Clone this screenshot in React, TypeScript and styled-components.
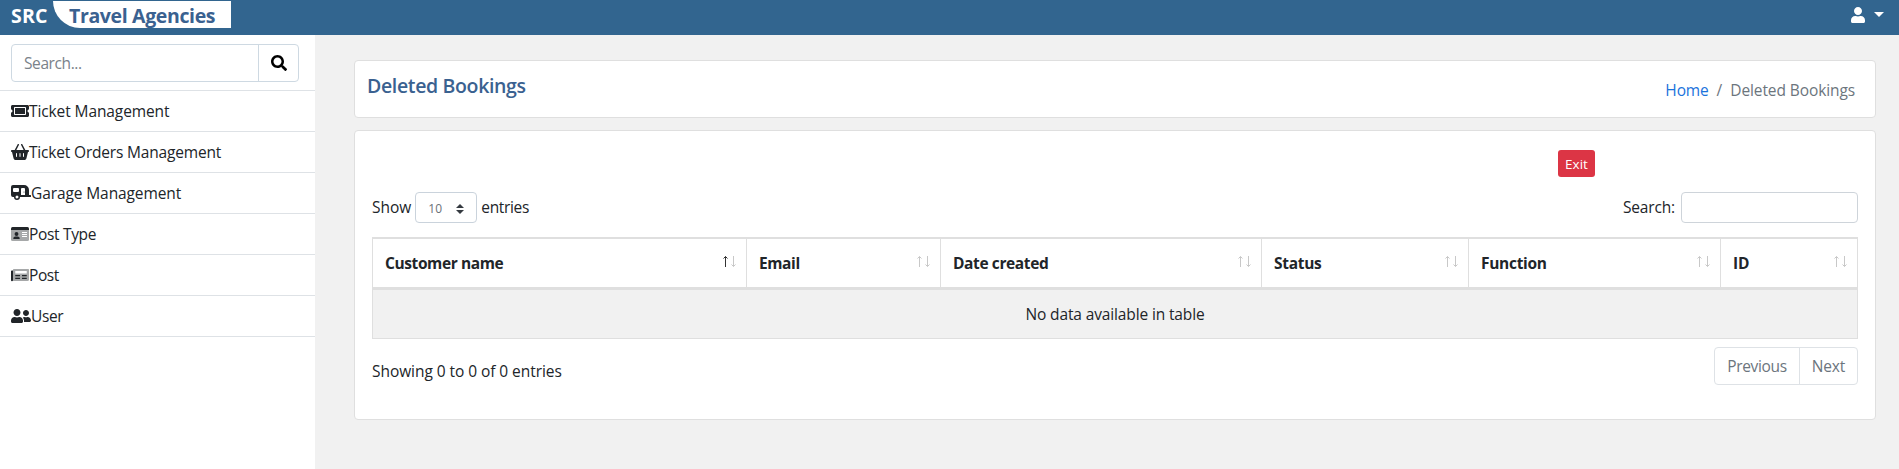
import React from 'react';
import styled, { createGlobalStyle } from 'styled-components';
import { FaCaravan, FaSearch, FaTicketAlt, FaUser, FaUserFriends } from 'react-icons/fa';
import { FaBasketShopping } from 'react-icons/fa6';

const GlobalStyle = createGlobalStyle`
  *, *::before, *::after { box-sizing: border-box; }
  body {
    margin: 0;
    background: #f1f1f1;
    color: #212529;
    font: 400 15.5px/24px "Open Sans", "Liberation Sans", sans-serif;
  }
`;

const Page = styled.div`
  height: 469px;
  display: flex;
  flex-direction: column;
  overflow: hidden;
`;

const Label = styled.span<{ $tracking?: number }>`
  letter-spacing: ${({ $tracking = 0 }) => $tracking}px;
  white-space: nowrap;
`;

const TopBar = styled.header`
  height: 35px;
  flex: none;
  display: flex;
  align-items: flex-start;
  background: #32658f;
  padding: 1px 15px 0 11px;
`;

const Brand = styled.div`
  display: flex;
  font-size: 19.5px;
  font-weight: 700;
  line-height: 29px;
  color: #fff;
`;

const BrandMark = styled(Label)`
  width: 42px;
`;

const BrandName = styled.div`
  width: 178px;
  height: 27px;
  padding-left: 16px;
  background: #fff;
  color: #3a6190;
  border-bottom-left-radius: 27px;
`;

const AccountMenu = styled.div`
  margin-left: auto;
  display: flex;
  align-items: flex-start;
  gap: 8px;
  padding-top: 6px;
  color: #fff;
`;

const Caret = styled.span`
  margin-top: 5px;
  border: 5px solid transparent;
  border-top-color: #fff;
  border-bottom: 0;
`;

const Body = styled.div`
  flex: 1;
  display: flex;
`;

const Sidebar = styled.aside`
  width: 315px;
  flex: none;
  background: #fff;
`;

const SearchGroup = styled.div`
  display: flex;
  width: 288px;
  height: 38px;
  margin: 9px 0 8px 11px;
  border: 1px solid #ced9e2;
  border-radius: 4px;
`;

const SearchField = styled.div`
  width: 247px;
  padding: 6px 12px;
  border-right: 1px solid #ced9e2;
  color: #7a828a;
`;

const SearchButton = styled.div`
  flex: 1;
  display: flex;
  align-items: center;
  justify-content: center;
  color: #000;
`;

const Menu = styled.nav`
  border-top: 1px solid #dee2e6;
`;

const MenuItem = styled.div<{ $iconWidth: number }>`
  display: flex;
  align-items: center;
  height: 41px;
  padding-left: 11px;
  border-bottom: 1px solid #dee2e6;

  svg {
    flex: none;
    width: ${({ $iconWidth }) => $iconWidth}px;
    height: 16px;
    margin-bottom: 1px;
  }
`;

const Content = styled.main`
  flex: 1;
  padding: 25px 23px 0 39px;
`;

const Card = styled.section`
  background: #fff;
  border: 1px solid #dfdfdf;
  border-radius: 4px;
`;

const TitleCard = styled(Card)`
  display: flex;
  justify-content: space-between;
  height: 58px;
  padding: 12px 20px 0 12px;
`;

const Title = styled.h1`
  margin: 0;
  color: #3a6190;
  font-size: 19.5px;
  font-weight: 600;
  line-height: 26px;
`;

const Breadcrumb = styled.div`
  display: flex;
  gap: 8px;
  padding-top: 5px;
  color: #6c757d;
`;

const HomeLink = styled(Label)`
  color: #1a73dc;
`;

const TableCard = styled(Card)`
  height: 290px;
  margin-top: 12px;
  padding: 19px 17px 0;
`;

const Actions = styled.div`
  display: flex;
  justify-content: flex-end;
  padding-right: 263px;
`;

const ExitButton = styled.div`
  width: 37px;
  height: 27px;
  border-radius: 3px;
  background: #dc3545;
  color: #fff;
  font-size: 13.5px;
  line-height: 28px;
  text-align: center;
`;

const Controls = styled.div`
  display: flex;
  justify-content: space-between;
  margin-top: 15px;
  height: 31px;
  line-height: 30px;
`;

const ControlGroup = styled.div`
  display: flex;
`;

const LengthSelect = styled.div`
  display: flex;
  align-items: center;
  justify-content: space-between;
  width: 62px;
  margin: 0 4px;
  padding: 2px 12px 0 12px;
  border: 1px solid #cad3dc;
  border-radius: 4px;
  color: #6a7178;
  font-size: 12px;
`;

const FilterInput = styled.div`
  width: 177px;
  margin-left: 6px;
  border: 1px solid #ced4da;
  border-radius: 4px;
`;

const TableFrame = styled.div`
  margin-top: 14px;
  border: 1px solid #dfdfdf;
  border-top-width: 2px;
`;

const HeadRow = styled.div`
  display: grid;
  grid-template-columns: 374px 194px 321px 207px 252px 1fr;
  height: 51px;
  border-bottom: 3px solid #dfdfdf;
`;

const HeadCell = styled.div`
  display: flex;
  justify-content: space-between;
  padding: 12px 9px 0 12px;
  font-weight: 700;
  border-right: 1px solid #dfdfdf;

  &:last-child { border-right: 0; }
  svg { flex: none; margin-top: 4px; }
`;

const EmptyRow = styled.div`
  height: 48px;
  background: #f1f1f1;
  text-align: center;
  line-height: 49px;
`;

const Footer = styled.div`
  display: flex;
  justify-content: space-between;
  margin-top: 8px;
`;

const Info = styled.div`
  padding-top: 12px;
`;

const Pager = styled.div`
  display: flex;
  height: 38px;
  border: 1px solid #dee2e6;
  border-radius: 4px;
  color: #6c757d;
`;

const PageButton = styled.div<{ $width: number }>`
  width: ${({ $width }) => $width}px;
  padding-top: 6px;
  text-align: center;

  & + & { border-left: 1px solid #dee2e6; }
`;

const IdCardIcon = () => (
  <svg viewBox="0 0 576 512" fill="currentColor">
    <path opacity=".4" d="M0 128v304a48 48 0 0 0 48 48h480a48 48 0 0 0 48-48V128z" />
    <path d="M528 32H48A48 48 0 0 0 0 80v48h576V80a48 48 0 0 0-48-48z" />
    <circle cx="176" cy="256" r="62" />
    <path d="M72 400c0-42 34-66 70-66h68c36 0 70 24 70 66 0 9-7 16-16 16H88c-9 0-16-7-16-16z" />
    <path fill="#fff" d="M352 192h160v32H352zM352 256h160v32H352zM352 320h160v32H352z" />
  </svg>
);

const NewspaperIcon = () => (
  <svg viewBox="0 0 576 512" fill="currentColor">
    <path
      opacity=".4"
      fillRule="evenodd"
      d="M552 64H88a24 24 0 0 0-24 24v336c0 9-2 17-5 24h469a48 48 0 0 0 48-48V88a24 24 0 0 0-24-24zM136 128h368v80H136z"
    />
    <path d="M0 136v288a32 32 0 0 0 64 0V112H24a24 24 0 0 0-24 24zM136 256h152v36H136zM352 256h152v36H352zM136 346h152v36H136zM352 346h152v36H352z" />
  </svg>
);

const SelectArrows = () => (
  <svg width="8" height="10" viewBox="0 0 8 10" fill="#343a40">
    <path d="M4 0 8 4H0zM0 6h8L4 10z" />
  </svg>
);

const SortArrows = ({ active = false }: { active?: boolean }) => (
  <svg width="15" height="13" viewBox="0 0 15 13" fill="none">
    <path d="M3.5 12V1.5M1.5 3.5l2-2 2 2" stroke={active ? '#333' : '#c8c8c8'} />
    <path d="M11.5 1v10.5M9.5 9.5l2 2 2-2" stroke="#c8c8c8" />
  </svg>
);

const menu = [
  { icon: <FaTicketAlt />, width: 18, text: 'Ticket Management', tracking: -0.1 },
  { icon: <FaBasketShopping />, width: 18, text: 'Ticket Orders Management', tracking: -0.18 },
  { icon: <FaCaravan />, width: 20, text: 'Garage Management', tracking: -0.1 },
  { icon: <IdCardIcon />, width: 18, text: 'Post Type', tracking: -0.33 },
  { icon: <NewspaperIcon />, width: 18, text: 'Post', tracking: -0.4 },
  { icon: <FaUserFriends />, width: 20, text: 'User', tracking: -0.4 },
];

const columns = [
  { text: 'Customer name', tracking: -0.4 },
  { text: 'Email', tracking: -0.4 },
  { text: 'Date created', tracking: -0.38 },
  { text: 'Status', tracking: -0.3 },
  { text: 'Function', tracking: -0.3 },
  { text: 'ID', tracking: -0.2 },
];

export default function App() {
  return (
    <Page>
      <GlobalStyle />
      <TopBar>
        <Brand>
          <BrandMark $tracking={0.2}>SRC</BrandMark>
          <BrandName><Label $tracking={-0.36}>Travel Agencies</Label></BrandName>
        </Brand>
        <AccountMenu>
          <FaUser size={16} />
          <Caret />
        </AccountMenu>
      </TopBar>
      <Body>
        <Sidebar>
          <SearchGroup>
            <SearchField><Label $tracking={-0.4}>Search...</Label></SearchField>
            <SearchButton><FaSearch size={16} /></SearchButton>
          </SearchGroup>
          <Menu>
            {menu.map(({ icon, width, text, tracking }) => (
              <MenuItem key={text} $iconWidth={width}>
                {icon}
                <Label $tracking={tracking}>{text}</Label>
              </MenuItem>
            ))}
          </Menu>
        </Sidebar>
        <Content>
          <TitleCard>
            <Title><Label $tracking={-0.35}>Deleted Bookings</Label></Title>
            <Breadcrumb>
              <HomeLink $tracking={-0.15}>Home</HomeLink>
              <Label>/</Label>
              <Label $tracking={-0.1}>Deleted Bookings</Label>
            </Breadcrumb>
          </TitleCard>
          <TableCard>
            <Actions><ExitButton>Exit</ExitButton></Actions>
            <Controls>
              <ControlGroup>
                <Label>Show</Label>
                <LengthSelect>10<SelectArrows /></LengthSelect>
                <Label $tracking={-0.35}>entries</Label>
              </ControlGroup>
              <ControlGroup>
                <Label $tracking={-0.15}>Search:</Label>
                <FilterInput />
              </ControlGroup>
            </Controls>
            <TableFrame>
              <HeadRow>
                {columns.map(({ text, tracking }, i) => (
                  <HeadCell key={text}>
                    <Label $tracking={tracking}>{text}</Label>
                    <SortArrows active={i === 0} />
                  </HeadCell>
                ))}
              </HeadRow>
              <EmptyRow><Label $tracking={-0.13}>No data available in table</Label></EmptyRow>
            </TableFrame>
            <Footer>
              <Info><Label $tracking={-0.06}>Showing 0 to 0 of 0 entries</Label></Info>
              <Pager>
                <PageButton $width={84}><Label $tracking={-0.32}>Previous</Label></PageButton>
                <PageButton $width={58}><Label $tracking={-0.1}>Next</Label></PageButton>
              </Pager>
            </Footer>
          </TableCard>
        </Content>
      </Body>
    </Page>
  );
}
